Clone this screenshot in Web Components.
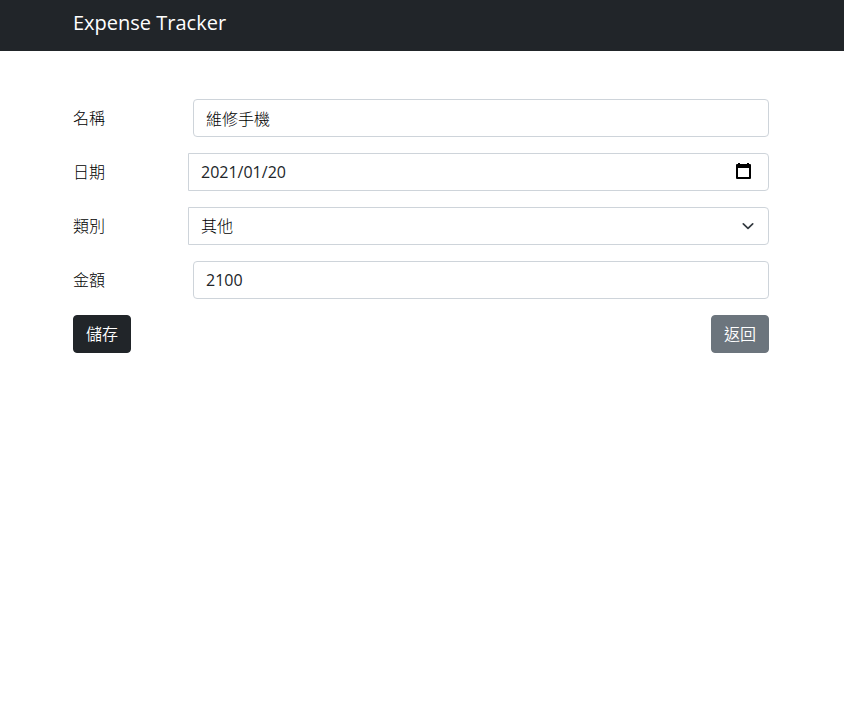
<!DOCTYPE html>
<html lang="zh-Hant">
<head>
<meta charset="utf-8">
<meta name="viewport" content="width=device-width, initial-scale=1">
<title>Expense Tracker</title>
<style>
  body {
    margin: 0;
    background: #fff;
    color: #212529;
    font: 16px/24px "Open Sans", "Noto Sans CJK TC", sans-serif;
    --gutter: 0 75px 0 73px;
    --border: 1px solid #ced4da;
  }
</style>
</head>
<body>
<nav-bar><a href="#">Expense Tracker</a></nav-bar>
<expense-form>
  <text-field label="名稱" name="name" value="維修手機"></text-field>
  <date-field label="日期" name="date" value="2021/01/20"></date-field>
  <select-field label="類別" name="category" options="家居物業,交通出行,休閒娛樂,餐飲食品,其他" value="其他"></select-field>
  <text-field label="金額" name="amount" value="2100" numeric></text-field>
  <form-button slot="actions">儲存</form-button>
  <form-button slot="actions" variant="secondary">返回</form-button>
</expense-form>

<script>
class NavBar extends HTMLElement {
  constructor() {
    super();
    this.attachShadow({ mode: "open" }).innerHTML = `
      <style>
        :host { display: block; background: #212529; }
        nav { padding: var(--gutter); }
        .brand { display: block; padding: 8px 0 13px; font-size: 20px; line-height: 30px; }
        ::slotted(a) { color: #fff; text-decoration: none; }
      </style>
      <nav><div class="brand"><slot></slot></div></nav>`;
  }
}

class ExpenseForm extends HTMLElement {
  constructor() {
    super();
    this.attachShadow({ mode: "open" }).innerHTML = `
      <style>
        :host { display: block; padding: var(--gutter); }
        form { display: flex; flex-direction: column; gap: 16px; margin-top: 48px; }
        .actions { display: flex; justify-content: space-between; }
      </style>
      <form>
        <slot></slot>
        <div class="actions"><slot name="actions"></slot></div>
      </form>`;
  }
}

class FormButton extends HTMLElement {
  constructor() {
    super();
    this.attachShadow({ mode: "open" }).innerHTML = `
      <style>
        :host { display: block; --fill: #212529; }
        :host([variant="secondary"]) { --fill: #6c757d; }
        button {
          display: block; margin: 0; padding: 6px 12px;
          border: 1px solid var(--fill); border-radius: 4px;
          background: var(--fill); color: #fff; font: inherit; font-weight: 350; cursor: pointer;
        }
      </style>
      <button type="button"><slot></slot></button>`;
  }
}

/* Shared row: a label column and a control that takes the remaining width. */
class BaseField extends HTMLElement {
  connectedCallback() {
    if (this.shadowRoot) return;
    this.attachShadow({ mode: "open" }).innerHTML = `
      <style>
        :host { display: grid; grid-template-columns: 115px minmax(0, 1fr); align-items: center; }
        label { font-weight: 300; color: #000; }
        .control { display: grid; position: relative; }
        input, select {
          box-sizing: border-box; width: 100%; height: 38px; margin: 0; padding: 6px 12px;
          border: var(--border); border-radius: 4px; background: #fff;
          color: #000; font: inherit; font-weight: 300; appearance: none; outline-offset: 1px;
        }
        svg { display: block; }
        ${this.styles()}
      </style>
      <label for="control">${this.getAttribute("label")}</label>
      <div class="control">${this.control()}</div>`;
  }
  attrs() {
    return `id="control" name="${this.getAttribute("name")}"`;
  }
}

class TextField extends BaseField {
  styles() { return `.control { padding-left: 5px; } :host([numeric]) input { color: inherit; font-weight: 400; }`; }
  control() { return `<input type="text" ${this.attrs()} value="${this.getAttribute("value")}">`; }
}

class DateField extends BaseField {
  styles() {
    return `
      input { border-radius: 0 4px 4px 0; padding-right: 40px; color: inherit; font-weight: 400; }
      button {
        position: absolute; right: 15px; top: 8px; width: 20px; height: 20px;
        display: grid; place-items: center; padding: 0; border: 0; background: none; cursor: pointer;
      }`;
  }
  control() {
    return `<input type="text" inputmode="numeric" ${this.attrs()} value="${this.getAttribute("value")}">
      <button type="button" aria-label="選擇日期">
        <svg width="20" height="20" viewBox="0 0 20 20"><path fill="#000" fill-rule="evenodd" d="M4 2h2v1h7V2h2v1h1q1 0 1 1v13q0 1-1 1H3q-1 0-1-1V4q0-1 1-1h1zM4 7v9h11V7z"/></svg>
      </button>`;
  }
}

class SelectField extends BaseField {
  styles() {
    return `
      select { border-radius: 0 4px 4px 0; padding-right: 36px; }
      svg { position: absolute; right: 13px; top: 11px; pointer-events: none; }`;
  }
  control() {
    const current = this.getAttribute("value");
    const options = this.getAttribute("options").split(",")
      .map(o => `<option${o === current ? " selected" : ""}>${o}</option>`).join("");
    return `<select ${this.attrs()}>${options}</select>
      <svg width="16" height="16" viewBox="0 0 16 16" aria-hidden="true"><path d="M3.3 5.8L8 10.3l4.7-4.5" fill="none" stroke="#343a40" stroke-width="1.7" stroke-linecap="round" stroke-linejoin="round"/></svg>`;
  }
}

customElements.define("nav-bar", NavBar);
customElements.define("expense-form", ExpenseForm);
customElements.define("form-button", FormButton);
customElements.define("text-field", TextField);
customElements.define("date-field", DateField);
customElements.define("select-field", SelectField);
</script>
</body>
</html>
